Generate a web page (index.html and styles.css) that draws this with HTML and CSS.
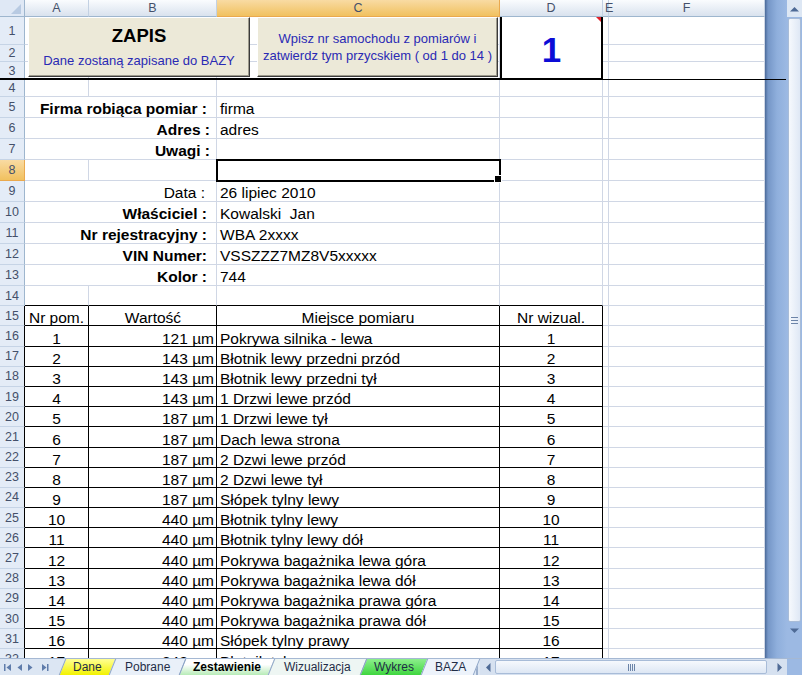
FILE: index.html
```html
<!DOCTYPE html>
<html lang="pl">
<head>
    <meta charset="UTF-8">
    <title>Zestawienie</title>
    <link rel="stylesheet" href="styles.css">
</head>
<body>
<div class="window">
    <div class="main">
        <div class="sheet">
            <table class="grid">
                <colgroup>
                    <col class="c-rh"><col class="c-a"><col class="c-b"><col class="c-c"><col class="c-d"><col class="c-e"><col class="c-f">
                </colgroup>
                <tr class="hdr">
                    <th class="corner"></th><th class="ch">A</th><th class="ch">B</th><th class="ch on">C</th><th class="ch">D</th><th class="ch narrow">E</th><th class="ch">F</th>
                </tr>
                <tr class="h28"><th class="rh">1</th><td></td><td></td><td></td><td class="dbox" rowspan="3">1</td><td></td><td></td></tr>
                <tr class="h17"><th class="rh">2</th><td></td><td></td><td></td><td></td><td></td></tr>
                <tr class="h18"><th class="rh">3</th><td></td><td></td><td></td><td></td><td></td></tr>
                <tr class="h17"><th class="rh">4</th><td></td><td></td><td></td><td></td><td></td><td></td></tr>
                <tr class="form"><th class="rh">5</th><td class="lbl" colspan="2">Firma robiąca pomiar :</td><td>firma</td><td></td><td></td><td></td></tr>
                <tr class="form"><th class="rh">6</th><td class="lbl near" colspan="2">Adres :</td><td>adres</td><td></td><td></td><td></td></tr>
                <tr class="form"><th class="rh">7</th><td class="lbl near" colspan="2">Uwagi :</td><td></td><td></td><td></td><td></td></tr>
                <tr class="form"><th class="rh on">8</th><td></td><td></td><td class="sel"></td><td></td><td></td><td></td></tr>
                <tr class="form"><th class="rh">9</th><td class="lbl thin" colspan="2">Data :</td><td>26 lipiec 2010</td><td></td><td></td><td></td></tr>
                <tr class="form"><th class="rh">10</th><td class="lbl" colspan="2">Właściciel :</td><td>Kowalski&nbsp; Jan</td><td></td><td></td><td></td></tr>
                <tr class="form"><th class="rh">11</th><td class="lbl" colspan="2">Nr rejestracyjny :</td><td>WBA 2xxxx</td><td></td><td></td><td></td></tr>
                <tr class="form"><th class="rh">12</th><td class="lbl" colspan="2">VIN Numer:</td><td>VSSZZZ7MZ8V5xxxxx</td><td></td><td></td><td></td></tr>
                <tr class="form"><th class="rh">13</th><td class="lbl" colspan="2">Kolor :</td><td>744</td><td></td><td></td><td></td></tr>
                <tr class="row pre"><th class="rh">14</th><td></td><td></td><td></td><td></td><td></td><td></td></tr>
                <tr class="row data head"><th class="rh">15</th><td>Nr pom.</td><td>Wartość</td><td>Miejsce pomiaru</td><td>Nr wizual.</td><td></td><td></td></tr>
                <tr class="row data"><th class="rh">16</th><td>1</td><td>121 µm</td><td>Pokrywa silnika - lewa</td><td>1</td><td></td><td></td></tr>
                <tr class="row data"><th class="rh">17</th><td>2</td><td>143 µm</td><td>Błotnik lewy przedni przód</td><td>2</td><td></td><td></td></tr>
                <tr class="row data"><th class="rh">18</th><td>3</td><td>143 µm</td><td>Błotnik lewy przedni tył</td><td>3</td><td></td><td></td></tr>
                <tr class="row data"><th class="rh">19</th><td>4</td><td>143 µm</td><td>1 Drzwi lewe przód</td><td>4</td><td></td><td></td></tr>
                <tr class="row data"><th class="rh">20</th><td>5</td><td>187 µm</td><td>1 Drzwi lewe tył</td><td>5</td><td></td><td></td></tr>
                <tr class="row data"><th class="rh">21</th><td>6</td><td>187 µm</td><td>Dach lewa strona</td><td>6</td><td></td><td></td></tr>
                <tr class="row data"><th class="rh">22</th><td>7</td><td>187 µm</td><td>2 Dzwi lewe przód</td><td>7</td><td></td><td></td></tr>
                <tr class="row data"><th class="rh">23</th><td>8</td><td>187 µm</td><td>2 Dzwi lewe tył</td><td>8</td><td></td><td></td></tr>
                <tr class="row data"><th class="rh">24</th><td>9</td><td>187 µm</td><td>Słópek tylny lewy</td><td>9</td><td></td><td></td></tr>
                <tr class="row data"><th class="rh">25</th><td>10</td><td>440 µm</td><td>Błotnik tylny lewy</td><td>10</td><td></td><td></td></tr>
                <tr class="row data"><th class="rh">26</th><td>11</td><td>440 µm</td><td>Błotnik tylny lewy dół</td><td>11</td><td></td><td></td></tr>
                <tr class="row data"><th class="rh">27</th><td>12</td><td>440 µm</td><td>Pokrywa bagażnika lewa góra</td><td>12</td><td></td><td></td></tr>
                <tr class="row data"><th class="rh">28</th><td>13</td><td>440 µm</td><td>Pokrywa bagażnika lewa dół</td><td>13</td><td></td><td></td></tr>
                <tr class="row data"><th class="rh">29</th><td>14</td><td>440 µm</td><td>Pokrywa bagażnika prawa góra</td><td>14</td><td></td><td></td></tr>
                <tr class="row data"><th class="rh">30</th><td>15</td><td>440 µm</td><td>Pokrywa bagażnika prawa dół</td><td>15</td><td></td><td></td></tr>
                <tr class="row data"><th class="rh">31</th><td>16</td><td>440 µm</td><td>Słópek tylny prawy</td><td>16</td><td></td><td></td></tr>
                <tr class="row data"><th class="rh">32</th><td>17</td><td>348 µm</td><td>Błotnik tylny prawy</td><td>17</td><td></td><td></td></tr>
            </table>
        </div>
        <div class="frame"></div>
        <div class="vscroll">
            <div class="sb-btn light">
                <svg width="9" height="6" viewBox="0 0 9 6"><path d="M0 5.5L4.5 1 9 5.5z" fill="#4e6a96"/></svg>
            </div>
            <div class="vthumb"><i class="grip-h"></i></div>
            <div class="sb-btn">
                <svg width="9" height="6" viewBox="0 0 9 6"><path d="M0 .5L4.5 5 9 .5z" fill="#4e6a96"/></svg>
            </div>
        </div>

        <!-- przyciski i linia leżą nad arkuszem -->
        <div class="btn zapis"><b>ZAPIS</b><span>Dane zostaną zapisane do BAZY</span></div>
        <div class="btn wpisz"><span>Wpisz nr samochodu z pomiarów i<br>zatwierdz tym przycskiem ( od 1 do 14 )</span></div>
        <div class="rule thick"></div>
        <div class="rule thin"></div>
    </div>

    <div class="tabbar">
        <div class="nav">
            <svg width="52" height="16" viewBox="0 0 52 16">
                <g fill="#5f7cab">
                    <rect x="4" y="5" width="1.5" height="7"/><path d="M11 5v7L6.5 8.5z"/>
                    <path d="M22 5v7l-4.5-3.5z"/>
                    <path d="M28 5v7l4.5-3.5z"/>
                    <path d="M42 5v7l4.5-3.5z"/><rect x="47" y="5" width="1.5" height="7"/>
                </g>
            </svg>
        </div>
        <div class="tabs">
            <div class="tab t-dane"><span>Dane</span></div>
            <div class="tab t-pob"><span>Pobrane</span></div>
            <div class="tab t-zes"><span>Zestawienie</span></div>
            <div class="tab t-wiz"><span>Wizualizacja</span></div>
            <div class="tab t-wyk"><span>Wykres</span></div>
            <div class="tab t-baza"><span>BAZA</span></div>
        </div>
        <div class="split"></div>
        <div class="hscroll">
            <div class="sb-btn wide">
                <svg width="6" height="9" viewBox="0 0 6 9"><path d="M5.5 0L1 4.5 5.5 9z" fill="#4e6a96"/></svg>
            </div>
            <div class="hthumb"><i class="grip-v"></i></div>
            <div class="sb-btn wide">
                <svg width="6" height="9" viewBox="0 0 6 9"><path d="M.5 0L5 4.5 .5 9z" fill="#4e6a96"/></svg>
            </div>
        </div>
        <div class="corner-box"></div>
    </div>
</div>
</body>
</html>
```

FILE: styles.css
```css
* {
    box-sizing: border-box;
}
body {
    margin: 0;
    font-family: "Liberation Sans", Arial, sans-serif;
    color: #000;
    background: #fff;
}
.window {
    width: 802px;
    height: 675px;
    display: flex;
    flex-direction: column;
    overflow: hidden;
}
.main {
    position: relative;
    display: flex;
    height: 658px;
    flex: none;
    overflow: hidden;
}
.sheet {
    width: 765px;
    flex: none;
    overflow: hidden;
}
.frame {
    width: 22px;
    flex: none;
    background: linear-gradient(to right, #4b6a99, #7596c7 3px, #8fafdc 12px, #9cb9e3);
}

/* arkusz */
.grid {
    width: 765px;
    table-layout: fixed;
    border-collapse: separate;
    border-spacing: 0;
    font-size: 15.5px;
}
.c-rh { width: 25px; }
.c-a { width: 64px; }
.c-b { width: 128px; }
.c-c { width: 283px; }
.c-d { width: 103px; }
.c-e { width: 6px; }
.c-f { width: 156px; }

.hdr { height: 17px; }
.h28 { height: 28px; }
.h17 { height: 17px; }
.h18 { height: 18px; }
.form { height: 21px; }
.row { height: 20.2px; }

.grid td {
    padding: 0 3px;
    border-right: 1px solid #d0d7e5;
    border-bottom: 1px solid #d0d7e5;
    line-height: 15px;
    vertical-align: bottom;
    white-space: nowrap;
    overflow: hidden;
}
.grid th {
    padding: 0;
    font-weight: normal;
    font-size: 12.5px;
    line-height: 14px;
    color: #44506a;
    overflow: hidden;
}
.grid th.corner {
    position: relative;
    background: #dfe8f5;
    border-right: 1px solid #9eb6ce;
    border-bottom: 1px solid #9eb6ce;
}
.grid th.corner::after {
    content: "";
    position: absolute;
    right: 3px;
    bottom: 2px;
    border-left: 10px solid transparent;
    border-bottom: 10px solid #b8cae2;
}
.grid th.ch {
    background: linear-gradient(#fafcfe, #d9e2ee);
    border-right: 1px solid #c3d1e3;
    border-bottom: 1px solid #9eb6ce;
}
.grid th.narrow {
    position: relative;
    z-index: 1;
    overflow: visible;
    text-indent: 2px;
}
.grid th.rh {
    background: #e4ecf7;
    border-right: 1px solid #9eb6ce;
    border-bottom: 1px solid #c6d4e6;
}
.grid th.on {
    background: linear-gradient(#f9dba3, #f1c15f);
    border-color: #eaa94e;
}

.grid td.dbox {
    position: relative;
    border: 2px solid #000;
    border-top: 0;
    padding-top: 4px;
    text-align: center;
    vertical-align: middle;
    font-size: 35px;
    font-weight: bold;
    line-height: 35px;
    color: #0c0cd6;
}
.grid td.dbox::before {
    content: "";
    position: absolute;
    top: 0;
    right: 0;
    border-top: 5px solid #e0202a;
    border-left: 5px solid transparent;
}

.grid .form td {
    padding-bottom: 1px;
}
.grid td.lbl {
    text-align: right;
    font-weight: bold;
    padding-right: 9px;
}
.grid td.lbl.near {
    padding-right: 6px;
}
.grid td.lbl.thin {
    font-weight: normal;
    padding-right: 11px;
}
.grid td.sel {
    position: relative;
    overflow: visible;
    outline: 2px solid #000;
    outline-offset: -1px;
}
.grid td.sel::after {
    content: "";
    position: absolute;
    right: -3px;
    bottom: -3px;
    width: 6px;
    height: 6px;
    background: #000;
    border: 1px solid #fff;
}

/* tabela pomiarów */
.grid .pre td:nth-of-type(-n+4) {
    border-bottom-color: #000;
}
.grid .data th {
    border-right-color: #000;
}
.grid .data td {
    border-right-color: #000;
    border-bottom-color: #000;
}
.grid .data td:nth-of-type(1),
.grid .data td:nth-of-type(4) {
    text-align: center;
}
.grid .data td:nth-of-type(2) {
    text-align: right;
    padding-right: 2px;
}
.grid .data td:nth-of-type(n+5) {
    border-color: #d0d7e5;
}
.grid .data.head td {
    text-align: center;
}

/* przyciski */
.btn {
    position: absolute;
    top: 17px;
    height: 60px;
    display: flex;
    flex-direction: column;
    align-items: center;
    justify-content: center;
    background: #ece9d8;
    border: 1px solid;
    border-color: #fff #3a3a3a #3a3a3a #fff;
    box-shadow: inset -1px -1px 0 #9d9a8c;
    color: #2a2ab4;
    font-size: 13px;
    text-align: center;
}
.zapis {
    left: 28px;
    width: 222px;
    gap: 7px;
}
.zapis b {
    font-size: 18.5px;
    line-height: 20px;
    color: #000;
}
.zapis span {
    line-height: 15px;
}
.wpisz {
    left: 257px;
    width: 241px;
    line-height: 17px;
}
.rule {
    position: absolute;
    background: #000;
}
.rule.thick {
    left: 0;
    top: 78px;
    width: 603px;
    height: 2px;
}
.rule.thin {
    left: 603px;
    top: 79px;
    width: 183px;
    height: 1px;
}

/* paski przewijania */
.vscroll {
    width: 15px;
    flex: none;
    display: flex;
    flex-direction: column;
    background: #9cb9e3;
}
.sb-btn {
    height: 17px;
    flex: none;
    display: flex;
    align-items: center;
    justify-content: center;
}
.sb-btn.light {
    background: #dde7f4;
}
.sb-btn.wide {
    width: 15px;
    height: auto;
}
.vthumb {
    height: 604px;
    margin: 1px 1px 0 1px;
    flex: none;
    display: flex;
    align-items: center;
    justify-content: center;
    background: linear-gradient(to right, #f6f9fd, #dfe8f5);
    border: 1px solid #a8bcd8;
    border-radius: 2px;
}
.grip-h {
    width: 7px;
    height: 7px;
    background: repeating-linear-gradient(#6c84a8 0 1px, transparent 1px 3px);
}

/* zakładki */
.tabbar {
    height: 17px;
    flex: none;
    display: flex;
    background: #dce6f3;
    border-top: 1px solid #a5b8d3;
    font-size: 12px;
}
.nav {
    width: 60px;
    flex: none;
    display: flex;
    align-items: center;
}
.tabs {
    display: flex;
    flex: none;
    padding-left: 2px;
}
.tab {
    display: flex;
    align-items: center;
    padding: 0 10px;
    margin-right: -1px;
    border-left: 1px solid #8ea5c6;
    border-right: 1px solid #8ea5c6;
    transform: skewX(-22deg);
    color: #1f2d47;
}
.tab span {
    transform: skewX(22deg);
}
.t-dane { background: linear-gradient(#ffff94, #f2f200); }
.t-pob { background: #e9f0f9; padding: 0 12px; }
.t-zes {
    background: linear-gradient(#ffffff 35%, #b7ebb7);
    font-weight: bold;
    color: #000;
}
.t-wiz { background: #eef6f3; padding: 0 12px; }
.t-wyk { background: linear-gradient(#8cef8c, #3fd63f); }
.t-baza { background: #edf3fb; }
.split {
    width: 4px;
    margin-left: auto;
    margin-right: 2px;
    border-left: 1px solid #9aaecb;
    border-right: 1px solid #9aaecb;
    background: #f3f6fb;
}
.hscroll {
    width: 307px;
    flex: none;
    display: flex;
    background: #d6e1f0;
}
.hthumb {
    width: 272px;
    margin: 1px 5px 1px 0;
    display: flex;
    align-items: center;
    justify-content: center;
    background: linear-gradient(#f6f9fd, #dde7f4);
    border: 1px solid #a8bcd8;
    border-radius: 2px;
}
.grip-v {
    width: 7px;
    height: 7px;
    background: repeating-linear-gradient(to right, #6c84a8 0 1px, transparent 1px 2px);
}
.corner-box {
    width: 15px;
    flex: none;
    background: #9cb9e3;
}
```
